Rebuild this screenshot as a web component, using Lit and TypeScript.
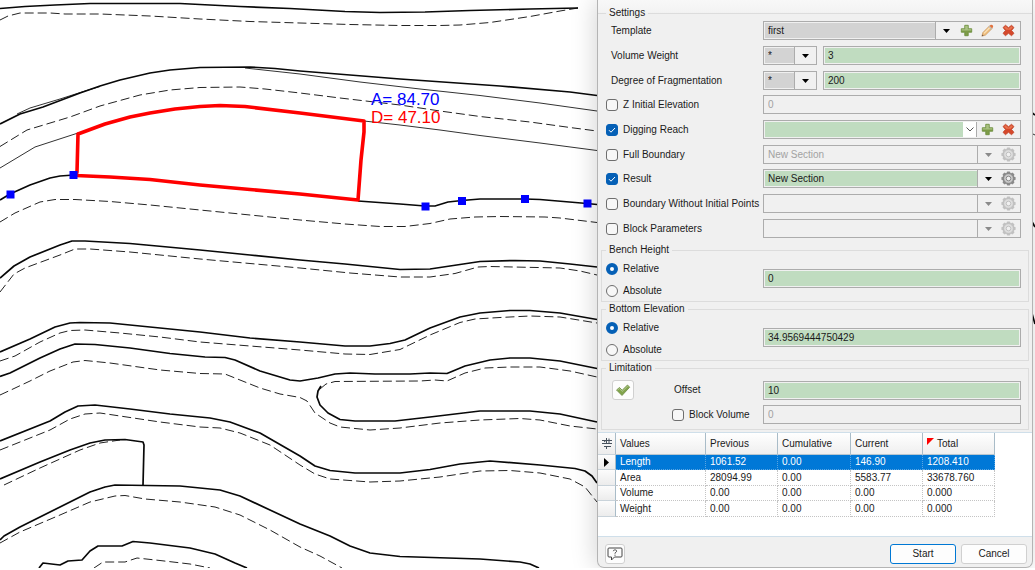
import { LitElement, html, svg, css, nothing } from "lit";
import { customElement, property } from "lit/decorators.js";

const solid = [
  "0,8.5 25,6.5 55,5 90,3.5 180,3.5 210,5 240,6.5 290,8.5 345,11.5 380,12.5 425,12 470,10.5 530,9 578,8",
  "0,124 20,114 43,107 80,93 100,86 120,80 150,73 170,70 200,67.5 250,67 275,68.5 300,71 400,79 500,86 570,92 597,95.5",
  "0,200 10,194 30,185 50,178 60,176 74,175",
  "358,201 400,204 425,206 435,206 448,202 462,200.5 480,199 525,199 540,199.5 587,203.5 597,204.5",
  "0,278 14,266 30,257 60,245 72,241 85,241 130,243.5 200,250 250,255 300,260 345,264 400,269.5 430,269 460,264.5 480,261.5 515,260.5 540,261 570,264 597,267",
  "0,352 30,339 55,327 70,323 80,322.5 110,323 150,327 200,332 250,338 300,342 345,346 370,346 390,343.5 405,340 430,328 460,317 480,313 510,310.5 530,310.5 560,313 597,319.5",
  "0,376.5 10,373 40,358 60,349 75,344 95,344.5 130,348 170,353.5 205,357 225,357.5 235,360 260,371 290,380 300,381 318,378 335,374 350,373 375,374 410,374 430,373 447,373.5 465,366 490,360 510,358 530,358 560,361 597,368.5",
  "321,386 318,391 317,397 320,405 328,413 340,419.5 355,421 395,421 430,417 480,411 530,411 560,414 597,422",
  "0,441 50,421 65,412 78,406 95,405 130,409 170,414 210,418 230,422 260,433 300,456 315,466 330,470.5 355,473 400,473 430,469.5 460,464 490,461 540,465 575,468.5 585,471 592,476 597,483",
  "0,479 40,462 70,450 90,443 105,440 125,439.5 143,442 144,445 143,485",
  "0,540 4,536 20,527 60,507 90,492 105,487 115,485 180,486 220,490 240,496 270,510 300,524 330,536 350,546 370,553 400,556.5 480,559 520,562 530,564 539,568",
  "39,568 43,563 60,565 68,561 82,560 90,551 98,546 122,546 133,541.5 150,543 190,548 215,554 235,563 247,568",
  "1031,112 1035,115",
  "1031,220 1035,227",
  "1031,310 1035,324",
];

const dashed = [
  "0,20 8,16 20,13 50,13 65,14 100,14 150,16 200,19 250,21.5 300,23 350,24.5 400,25.5 440,25.5 460,25 490,22.5 530,16.5 560,11 578,8",
  "0,146.5 27,130 70,117 100,106 140,95 170,90 200,87.5 240,87 265,89 300,93 340,98 400,105 440,111 480,116.5 530,122 570,127.5 597,131",
  "0,222 15,213 40,202 55,199.5 75,199.5 110,201.5 150,205 200,210 250,215 300,220 345,224 380,226.5 405,226.5 430,223.5 450,219 475,217 500,216.5 545,217 560,218 597,222.5",
  "0,292 14,274 25,268 60,255 75,249 90,249 130,252 200,259 250,263.5 300,268 350,273 400,277 430,277 455,273.5 478,267 490,266.5 560,268 580,271 597,275",
  "0,361 15,356 40,342 60,333 70,330.5 85,330 120,333 160,337 200,342 250,346 300,350 345,354 370,354.5 400,349.5 430,335 460,322.5 475,319 500,317.5 530,316 560,317 597,323",
  "0,395 13,389 30,381 50,371 73,362 85,360.5 110,363 160,370 200,373.5 225,374 240,380 260,388 280,394 300,397.5 307,401 315,413 330,423 340,427 370,430 400,428 440,423 480,420 520,418.5 540,420 570,426 597,429",
  "320,389 326,384 335,381.5 420,381 435,380 447,381 465,373 485,368 510,367 540,367 570,371 597,377",
  "0,450 50,430 70,419 85,414 100,413 120,416 160,422 200,427 220,428 240,433 270,445 300,465 315,474 330,479 370,482 400,481 440,477 480,471 510,470.5 540,473 570,479 585,487 597,502",
  "4,485 40,468 80,450 100,443 120,440",
  "0,543 20,532 60,515 90,502 115,496 125,495.5 145,499 180,502 215,507 240,515 270,530 300,547 320,556 342,568",
  "94,568 103,562 125,562 137,558 160,560.5 190,564 210,568",
];

const thin = [
  "17,114 30,108 60,99 85,91 100,86.5",
  "245,68 300,74 360,82 420,89 480,95.5 540,103 597,111",
  "0,168 35,147 78,133",
  "364,121 400,125 440,130 480,135.5 540,143 597,150.5",
  "1031,133 1035,135",
];

const block =
  "78,134 105,124 130,117 150,113 175,109 200,106.5 220,105.5 245,106.5 300,113 364,121 364,132 361,160 358,200 300,194 250,189.5 200,185 150,179.5 110,177 76,175.5 77,172";

const points = [
  [10.5, 194.5],
  [73.5, 175],
  [425.5, 206.5],
  [462, 201],
  [525, 199],
  [587.5, 203.5],
];

@customElement("bench-map")
export class BenchMap extends LitElement {
  static styles = css`
    :host {
      display: block;
      overflow: hidden;
    }
    .canvas {
      display: block;
      width: 1035px;
      height: 568px;
    }
    .solid { fill: none; stroke: #080808; stroke-width: 1.7; stroke-linejoin: round; }
    .dashed { fill: none; stroke: #222; stroke-width: 1; stroke-dasharray: 9 4; }
    .thin { fill: none; stroke: #333; stroke-width: 1; }
    .block { fill: none; stroke: #f00; stroke-width: 3.6; stroke-linejoin: round; }
    .point { fill: #00f; }
    .note { font: 17px/17px "Liberation Sans", Arial, sans-serif; }
    .area { fill: #00f; }
    .dist { fill: #f00; }
  `;

  render() {
    return html`<svg class="canvas" viewBox="0 0 1035 568" role="img" aria-label="Bench plan">
      ${thin.map((p) => svg`<polyline class="thin" points=${p}></polyline>`)}
      ${dashed.map((p) => svg`<polyline class="dashed" points=${p}></polyline>`)}
      ${solid.map((p) => svg`<polyline class="solid" points=${p}></polyline>`)}
      <polygon class="block" points=${block}></polygon>
      ${points.map(([x, y]) => svg`<rect class="point" x=${x - 4} y=${y - 4} width="8" height="8"></rect>`)}
      <text class="note area" x="371" y="105">A= 84.70</text>
      <text class="note dist" x="371" y="123">D= 47.10</text>
    </svg>`;
  }
}

const gearTeeth = [0, 45, 90, 135].map(
  (a) => svg`<rect x="5.7" y="0.4" width="3.6" height="14.2" rx="1" transform="rotate(${a} 7.5 7.5)"></rect>`
);

const icons: Record<string, unknown> = {
  plus: html`<svg viewBox="0 0 15 15" width="15" height="15">
    <path d="M5.5 1.5h4v4h4v4h-4v4h-4v-4h-4v-4h4z" fill="#7d9c48" stroke="#6c8d3e" />
    <path d="M6 2h3v4h4v1.5H2V6h4z" fill="#a9c183" />
  </svg>`,
  pencil: html`<svg viewBox="0 0 15 15" width="15" height="15">
    <path d="M1 14l1.2-4.2L10 2l3 3-7.8 7.8z" fill="#eebd7c" stroke="#c8935a" stroke-width=".8" />
    <path d="M3.5 10.8l7-7" stroke="#fae3bd" stroke-width="1.4" />
    <path d="M10 2l1.4-1.2q2.8-.4 2.6 2.4L13 5z" fill="#e2703d" />
    <path d="M9.2 2.8l3 3" stroke="#b9bcc0" stroke-width="1.2" />
    <path d="M1 14l.6-2 1.4 1.4z" fill="#6b5140" />
  </svg>`,
  cross: html`<svg viewBox="0 0 15 15" width="15" height="15">
    <path d="M4 1.5l3.5 2.7L11 1.5l2.8 2.6L11 7.5l2.8 3.3-2.8 2.7-3.5-2.8L4 13.5l-2.8-2.7L4 7.5 1.2 4.1z" fill="#d5482b" stroke="#c24a31" stroke-width="1" stroke-linejoin="round" />
    <path d="M4 2.5l3.5 3L11 2.5l1.5 1.6-2.5 2.6H5L2.5 4.1z" fill="#e8744f" />
  </svg>`,
  gear: html`<svg viewBox="0 0 15 15" width="15" height="15">
    <g fill="#8a8a8a">${gearTeeth}<circle cx="7.5" cy="7.5" r="5.8" /></g>
    <circle cx="7.5" cy="7.5" r="4.8" fill="#c9c9c9" stroke="#777" stroke-width=".6" />
    <circle cx="7.5" cy="7.5" r="2.3" fill="#f0f0f0" stroke="#808080" stroke-width=".9" />
  </svg>`,
  check: html`<svg viewBox="0 0 16 14" width="16" height="14">
    <path d="M1.5 7l3-2.5 2.7 2.7L12.5 2l2.2 2.2-7.7 8.300z" fill="#82a44c" stroke="#6d8b45" stroke-width=".8" stroke-linejoin="round" />
    <path d="M2.5 7l2-1.5 2.7 2.9 5.3-5.2 1 1" fill="none" stroke="#b3ca91" stroke-width="1" />
  </svg>`,
  help: html`<svg viewBox="0 0 16 14" width="16" height="14">
    <path d="M2 1h12q1 0 1 1v7q0 1-1 1H7.5L4.5 13v-3H2q-1 0-1-1V2q0-1 1-1z" fill="none" stroke="#444" stroke-width="1" />
    <path d="M6.3 4.2q.1-1.4 1.7-1.4t1.7 1.3Q9.7 5 8 5.9v.9" fill="none" stroke="#555" stroke-width=".9" />
    <circle cx="8" cy="8.2" r=".6" fill="#555" />
  </svg>`,
  config: html`<svg viewBox="0 0 12 13" width="12" height="13">
    <path d="M1 3.5h10M1 6.5h10M3 9.5h7M5.5 1v5M8 6.5v-5M5.5 9.5V12M3 5l2.5-2" fill="none" stroke="#46515c" stroke-width="1" />
  </svg>`,
};

const arrow = html`<svg viewBox="0 0 7 4" width="7" height="4" aria-hidden="true"><path d="M0 0h7L3.5 4z" fill="currentColor" /></svg>`;

interface Field {
  id: string;
  label: string;
  check?: boolean;
  kind: "text" | "unit" | "template" | "reach" | "section";
  value: string;
  disabled?: boolean;
}

const groups: Field[][] = [
  [
    { id: "template", label: "Template", kind: "template", value: "first" },
    { id: "weight", label: "Volume Weight", kind: "unit", value: "3" },
    { id: "fragmentation", label: "Degree of Fragmentation", kind: "unit", value: "200" },
  ],
  [
    { id: "z", label: "Z Initial Elevation", check: false, kind: "text", value: "0", disabled: true },
    { id: "reach", label: "Digging Reach", check: true, kind: "reach", value: "" },
    { id: "full", label: "Full Boundary", check: false, kind: "section", value: "New Section", disabled: true },
  ],
  [
    { id: "result", label: "Result", check: true, kind: "section", value: "New Section" },
    { id: "boundary", label: "Boundary Without Initial Points", check: false, kind: "section", value: "", disabled: true },
    { id: "block", label: "Block Parameters", check: false, kind: "section", value: "", disabled: true },
  ],
];

const columns = ["Values", "Previous", "Cumulative", "Current", "Total"];
const rows = [
  ["Length", "1061.52", "0.00", "146.90", "1208.410"],
  ["Area", "28094.99", "0.00", "5583.77", "33678.760"],
  ["Volume", "0.00", "0.00", "0.00", "0.000"],
  ["Weight", "0.00", "0.00", "0.00", "0.000"],
];

@customElement("calc-dialog")
export class CalcDialog extends LitElement {
  @property({ type: Number }) selected = 0;

  static styles = css`
    :host {
      display: flex;
      flex-direction: column;
      box-sizing: border-box;
      background: linear-gradient(#f8f8f8, #f3f3f3 12px, #f0f0f0 13px);
      border: 1px solid #b4b4b4;
      border-top: 0;
      border-radius: 0 0 7px 7px;
      box-shadow: -2px 0 24px rgba(0, 0, 0, 0.17);
      color: #1a1a1a;
      font: 10px/12px "Liberation Sans", Arial, sans-serif;
      overflow: hidden;
    }
    * { box-sizing: border-box; }
    input, select, button {
      font: inherit;
      color: inherit;
      margin: 0;
      padding: 0;
      border-radius: 0;
    }
    fieldset {
      margin: 0 3px;
      padding: 0;
      border: 1px solid #dcdcdc;
      min-width: 0;
    }
    legend { padding: 0 3px; margin-left: 4px; line-height: 12px; }
    .settings { margin: 7px 0 0; border-width: 1px 0 0; padding-top: 2px; }
    .settings legend { margin-left: 8px; }
    .groups { display: grid; gap: 5px; }
    .group { display: grid; gap: 6px; }
    .row {
      display: grid;
      grid-template-columns: 157px minmax(0, 1fr);
      align-items: center;
      height: 19px;
      padding: 0 11px 0 8px;
    }
    .plain { padding-left: 5px; }
    .tick { display: flex; align-items: center; gap: 5px; white-space: nowrap; }
    .box, .dot {
      appearance: none;
      flex: none;
      width: 12px;
      height: 12px;
      border: 1px solid #6e6e6e;
      border-radius: 3px;
      background: #f7f7f7;
    }
    .dot { border-radius: 50%; }
    .box:checked {
      border-color: #0560b6;
      background: #0560b6 url("data:image/svg+xml,%3Csvg xmlns='http://www.w3.org/2000/svg' viewBox='0 0 10 10'%3E%3Cpath d='M2 5.2l2 2 4-4.2' fill='none' stroke='white'/%3E%3C/svg%3E");
    }
    .dot:checked { border: 4px solid #0560b6; background: #fff; }
    .field {
      display: flex;
      width: 100%;
      height: 19px;
      border: 1px solid #acacac;
      padding: 1px;
      min-width: 0;
    }
    .value {
      appearance: none;
      border: 0;
      outline: 0;
      flex: 1;
      width: 100%;
      height: 15px;
      min-width: 0;
      padding-left: 3px;
      background: #c0dcc0;
    }
    .grey { background: #d3d3d3; }
    .value:disabled { background: #f0f0f0; color: #a2a2a2; opacity: 1; }
    .unit { display: grid; grid-template-columns: 54px minmax(0, 1fr); gap: 6px; }
    .combo { display: grid; flex: 1; min-width: 0; height: 15px; }
    .combo > * { grid-area: 1 / 1; }
    .drop {
      justify-self: end;
      display: flex;
      align-items: center;
      justify-content: center;
      width: 21px;
      height: 17px;
      margin-top: -1px;
      border-left: 1px solid #acacac;
      background: #f0f0f0;
      color: #000;
      pointer-events: none;
    }
    .off .drop { color: #8a8a8a; }
    .chevron {
      justify-self: end;
      display: flex;
      align-items: center;
      justify-content: center;
      width: 14px;
      background: #fff;
      pointer-events: none;
    }
    .tool {
      display: flex;
      align-items: center;
      justify-content: center;
      flex: none;
      width: 21px;
      height: 15px;
      border: 0;
      background: none;
    }
    .tool:disabled { opacity: 0.45; }
    .tool svg { display: block; flex: none; width: 13px; height: 13px; }
    .wide svg { width: 15px; height: 15px; }
    .edge { box-shadow: -1px 0 #acacac; }

    .mode {
      display: grid;
      grid-template-columns: 157px minmax(0, 1fr);
      align-items: center;
      padding: 4px 7px 4px 4px;
    }
    .radios { display: grid; gap: 10px; padding-top: 3px; }
    .bench { margin-top: 6px; }
    .lower { margin-top: 1px; }
    .limits {
      display: grid;
      grid-template-columns: 60px 91px minmax(0, 1fr);
      row-gap: 5px;
      align-items: center;
      padding: 6px 7px 5px 10px;
    }
    .limits .tick { grid-column: 2; }
    .offset { padding-left: 2px; }
    .push {
      display: flex;
      align-items: center;
      justify-content: center;
      height: 20px;
      border: 1px solid #d0d0d0;
      border-radius: 3px;
      background: #fdfdfd;
    }
    .apply { width: 22px; }
    .help { width: 20px; margin-right: auto; }

    .grid {
      flex: 1;
      margin-top: 2px;
      border: 1px solid #cfdfea;
      border-width: 1px 0;
      background: #fff;
    }
    .data { border-collapse: separate; border-spacing: 0; table-layout: fixed; width: 397px; }
    .data th, .data td {
      padding: 0 0 0 4px;
      text-align: left;
      font-weight: normal;
      white-space: nowrap;
      overflow: hidden;
    }
    .data thead th {
      height: 22px;
      background: linear-gradient(#fff, #efefef);
      border-right: 1px solid #a9bcc8;
      border-bottom: 1px solid #b8c6cf;
    }
    .data td, .data .name {
      height: 15px;
      line-height: 14px;
      border-right: 1px dotted #c4c4c4;
      border-bottom: 1px dotted #c4c4c4;
    }
    .data tbody tr:nth-child(even) td, .data tbody tr:nth-child(even) th { height: 16px; }
    .data .mark { padding: 0; background: linear-gradient(#fcfcfc, #ececec); border-right: 1px solid #a9bcc8; border-bottom: 1px solid #c9d3da; }
    .mark svg { display: block; margin: auto; }
    .picked td, .picked .name { background: #0078d7; color: #fff; border-color: #5aa5e2; }
    .c0 { width: 18px; }
    .c1 { width: 90px; }
    .c2 { width: 72px; }
    .c3 { width: 73px; }
    .total { display: flex; align-items: center; gap: 3px; }
    .flag { align-self: flex-start; }

    .footer {
      display: flex;
      align-items: center;
      gap: 5px;
      height: 30px;
      padding: 3px 5px 0 7px;
    }
    .action { width: 66px; }
    .start { border-color: #0078d4; }
  `;

  private combo(f: Field, grey: boolean, value: string) {
    return html`<span class="combo">
      <select class="value ${grey ? "grey" : ""}" id=${f.id} ?disabled=${!!f.disabled} aria-label=${f.label}>
        <option>${value}</option>
      </select>
      <span class="drop">${arrow}</span>
    </span>`;
  }

  private tool(icon: string, label: string, disabled = false) {
    return html`<button class="tool ${icon === "gear" ? "wide" : ""}" aria-label=${label} ?disabled=${disabled}>${icons[icon]}</button>`;
  }

  private text(id: string, value: string, disabled = false) {
    return html`<span class="field"><input class="value" id=${id} .value=${value} ?disabled=${disabled} /></span>`;
  }

  private control(f: Field) {
    switch (f.kind) {
      case "template":
        return html`<span class="field">${this.combo(f, true, f.value)}${this.tool("plus", "Add")}${this.tool("pencil", "Edit")}${this.tool("cross", "Delete")}</span>`;
      case "unit":
        return html`<span class="unit">
          <span class="field">${this.combo({ ...f, id: f.id + "-unit" }, true, "*")}</span>
          ${this.text(f.id, f.value)}
        </span>`;
      case "reach":
        return html`<span class="field">
          <span class="combo">
            <select class="value" id=${f.id} aria-label=${f.label}><option></option></select>
            <span class="chevron"><svg viewBox="0 0 8 5" width="8" height="5"><path d="M.5.5L4 4 7.5.5" fill="none" stroke="#555" /></svg></span>
          </span>
          <span class="edge">${this.tool("plus", "Add")}</span>${this.tool("cross", "Delete")}
        </span>`;
      case "section":
        return html`<span class="field ${f.disabled ? "off" : ""}">${this.combo(f, false, f.value)}${this.tool("gear", "Options", f.disabled)}</span>`;
      default:
        return this.text(f.id, f.value, f.disabled);
    }
  }

  private row(f: Field) {
    const label =
      f.check === undefined
        ? html`<label class="plain" for=${f.id}>${f.label}</label>`
        : html`<label class="tick"><input class="box" type="checkbox" .checked=${f.check} />${f.label}</label>`;
    return html`<div class="row">${label}${this.control(f)}</div>`;
  }

  private mode(name: string, title: string, value: string, cls: string) {
    return html`<fieldset class=${cls}>
      <legend>${title}</legend>
      <div class="mode">
        <div class="radios">
          <label class="tick"><input class="dot" type="radio" name=${name} checked />Relative</label>
          <label class="tick"><input class="dot" type="radio" name=${name} />Absolute</label>
        </div>
        <span class="field"><input class="value" aria-label=${title} .value=${value} /></span>
      </div>
    </fieldset>`;
  }

  render() {
    return html`
      <fieldset class="settings">
        <legend>Settings</legend>
        <div class="groups">${groups.map((g) => html`<div class="group">${g.map((f) => this.row(f))}</div>`)}</div>
      </fieldset>
      ${this.mode("bench", "Bench Height", "0", "bench")}
      ${this.mode("bottom", "Bottom Elevation", "34.9569444750429", "lower")}
      <fieldset class="lower">
        <legend>Limitation</legend>
        <div class="limits">
          <button class="push apply" aria-label="Apply">${icons.check}</button>
          <label class="offset" for="offset">Offset</label>
          ${this.text("offset", "10")}
          <label class="tick"><input class="box" type="checkbox" />Block Volume</label>
          <span class="field"><input class="value" aria-label="Block Volume" .value=${"0"} disabled /></span>
        </div>
      </fieldset>
      <div class="grid">
        <table class="data">
          <colgroup><col class="c0" /><col class="c1" /><col class="c2" /><col class="c3" /><col class="c2" /><col class="c2" /></colgroup>
          <thead>
            <tr>
              <th class="mark">${icons.config}</th>
              ${columns.map((c) =>
                c === "Total"
                  ? html`<th><span class="total"><svg class="flag" width="7" height="7" viewBox="0 0 7 7"><path d="M0 0h7L0 7z" fill="#f00" /></svg>${c}</span></th>`
                  : html`<th>${c}</th>`
              )}
            </tr>
          </thead>
          <tbody>
            ${rows.map(
              ([name, ...cells], i) => html`<tr class=${i === this.selected ? "picked" : ""}>
                <th class="mark">${i === this.selected ? html`<svg width="5" height="9" viewBox="0 0 5 9"><path d="M0 0l5 4.5L0 9z" /></svg>` : nothing}</th>
                <th class="name" scope="row">${name}</th>
                ${cells.map((c) => html`<td>${c}</td>`)}
              </tr>`
            )}
          </tbody>
        </table>
      </div>
      <div class="footer">
        <button class="push help" aria-label="Help">${icons.help}</button>
        <button class="push action start">Start</button>
        <button class="push action">Cancel</button>
      </div>
    `;
  }
}

@customElement("app-root")
export class AppRoot extends LitElement {
  static styles = css`
    :host { display: block; background: #fff; }
    .desk {
      display: grid;
      grid-template-columns: minmax(0, 1fr) 436px 2px;
      min-height: calc(100vh - 2px);
      overflow: hidden;
    }
    .map { grid-area: 1 / 1 / 2 / 4; }
    .dialog { grid-area: 1 / 2; }
  `;

  render() {
    return html`<main class="desk">
      <bench-map class="map"></bench-map>
      <calc-dialog class="dialog"></calc-dialog>
    </main>`;
  }
}
